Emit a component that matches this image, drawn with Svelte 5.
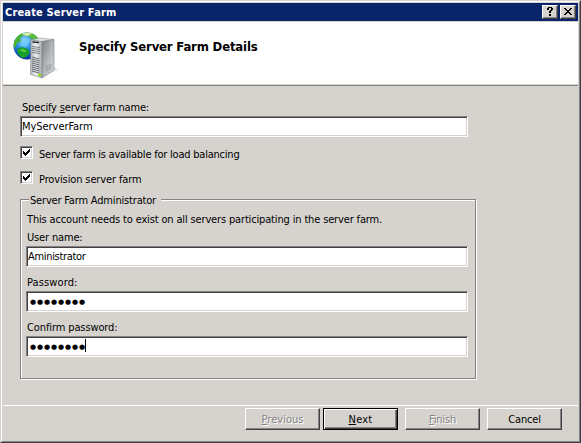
<script>
  let name = $state('MyServerFarm');
  const bullets = '●●●●●●●●';

  const accounts = [
    { label: 'User name:', labelWidth: 55.5, value: 'Aministrator', valueWidth: 57.5 },
    { label: 'Password:', labelWidth: 50.5, value: bullets, secret: true },
    { label: 'Confirm password:', labelWidth: 90.5, value: bullets, secret: true, focused: true }
  ];
  const checks = [
    { label: 'Server farm is available for load balancing', width: 200.5 },
    { label: 'Provision server farm', width: 102.5 }
  ];
  const buttons = [
    { key: 'P', rest: 'revious', width: 42, disabled: true },
    { key: 'N', rest: 'ext', width: 24, primary: true },
    { key: 'F', rest: 'inish', width: 27, disabled: true },
    { key: '', rest: 'Cancel', width: 32.5 }
  ];

  // Spreads the letters so that the text has the dialog font's advance width.
  function fit(node, width) {
    const natural = node.getBoundingClientRect().width;
    const count = node.textContent.length;
    node.style.letterSpacing = `${(width - natural) / count}px`;
  }
</script>

<div class="window">
  <div class="frame">
    <header class="titlebar">
      <span class="text" use:fit={111.5}>Create Server Farm</span>
      <div class="controls">
        <button class="control" aria-label="Help">
          <svg width="12" height="10" viewBox="0 0 12 10" shape-rendering="crispEdges">
            <path d="M4 0h4v1h-4zM3 1h2v2h-2zM7 1h2v2h-2zM6 3h2v1h-2zM5 4h2v2h-2zM5 7h2v2h-2z" />
          </svg>
        </button>
        <button class="control" aria-label="Close">
          <svg width="12" height="10" viewBox="0 0 12 10" shape-rendering="crispEdges">
            <path d="M2 1h2v1h-2zM8 1h2v1h-2zM3 2h2v1h-2zM7 2h2v1h-2zM4 3h4v1h-4zM5 4h2v1h-2zM4 5h4v1h-4zM3 6h2v1h-2zM7 6h2v1h-2zM2 7h2v1h-2zM8 7h2v1h-2z" />
          </svg>
        </button>
      </div>
    </header>

    <div class="banner">
      <svg class="logo" width="48" height="50" viewBox="0 0 48 50">
        <defs>
          <radialGradient id="globe" cx="40%" cy="30%" r="70%">
            <stop offset="0" stop-color="#9bdcff" />
            <stop offset=".45" stop-color="#278be0" />
            <stop offset="1" stop-color="#0b2e9c" />
          </radialGradient>
          <linearGradient id="side" x1="0" x2="1" y1="0" y2="1">
            <stop offset="0" stop-color="#777c80" />
            <stop offset=".5" stop-color="#b4b7b9" />
            <stop offset="1" stop-color="#dcdddf" />
          </linearGradient>
          <linearGradient id="front" x1="0" x2="1">
            <stop offset="0" stop-color="#b5b8bc" />
            <stop offset=".5" stop-color="#edeff1" />
            <stop offset="1" stop-color="#a4a8ac" />
          </linearGradient>
          <clipPath id="disc"><circle cx="16" cy="17" r="13.5" /></clipPath>
        </defs>
        <circle cx="16" cy="17" r="13.5" fill="url(#globe)" />
        <g clip-path="url(#disc)">
          <path d="M2 17L3 10L8 5L13 3L12 7L9 9L10 12L6 14L4 19Z" fill="#45b52e" />
          <path d="M13 3L20 3L27 7L29 12L24 10L20 10L18 7L14 7Z" fill="#5dbb38" />
          <path d="M10 5L17 3L21 5L16 7Z" fill="#d9edaa" />
          <path d="M6 20L11 18L17 20L19 24L15 28L11 29L7 25Z" fill="#16a02b" />
          <path d="M8 21L12 20L16 22L13 23Z" fill="#61cf40" />
          <path d="M10 13L16 9L20 11L15 18L9 17Z" fill="#70cdf6" opacity=".7" />
        </g>
        <path d="M31 48L47 41L44 38L34 43Z" fill="#cfcfcf" opacity=".5" />
        <path d="M20 11L29 9L43 10.500L31 13Z" fill="#dfe2e4" stroke="#8c9093" stroke-width=".5" />
        <path d="M31 12.500L43 10.500V41L31 49Z" fill="url(#side)" stroke="#797d80" stroke-width=".6" />
        <path d="M20 11L31 12.500V49L19.500 45.500Z" fill="url(#front)" stroke="#85898d" stroke-width=".6" />
        <path d="M21.500 13L28 13.500" stroke="#26292c" stroke-width="1.300" />
        <path d="M21 17.500L29 18.500M21 19.500L29 20.500M21 21.500L29 22.500M21 23.500L29 24.500" stroke="#777c81" stroke-width=".9" />
        <path d="M21 28L28.500 30M21 30L28.500 32M21 32L28.500 34M21 34L28.500 36M21 36L28.500 38M21 38L28.500 40M21 40L28.500 42M21 42L28.500 44" stroke="#666b72" stroke-width="1" />
        <path d="M35 38L41 35M35 40L41 37M35 42L41 39" stroke="#757a7e" stroke-width=".9" stroke-dasharray="1 .6" />
        <rect x="27" y="45" width="3" height="2" fill="#82e600" />
      </svg>
      <h1><span class="text" use:fit={178.5}>Specify Server Farm Details</span></h1>
    </div>

    <main class="content">
      <label class="caption" for="farm"><span class="text" use:fit={127}>Specify <u>s</u>erver farm name:</span></label>
      <div class="field" id="farm"><span class="text" use:fit={70.5}>{name}</span></div>

      <div class="checks">
        {#each checks as check}
          <div class="check">
            <span class="box">
              <svg width="9" height="9" viewBox="0 0 9 9" shape-rendering="crispEdges">
                <path d="M1 3h1v3h-1zM2 4h1v3h-1zM3 5h1v3h-1zM4 4h1v3h-1zM5 3h1v3h-1zM6 2h1v3h-1zM7 1h1v3h-1z" />
              </svg>
            </span>
            <span class="text" use:fit={check.width}>{check.label}</span>
          </div>
        {/each}
      </div>

      <section class="group">
        <div class="legend"><span class="text" use:fit={126}>Server Farm Administrator</span></div>
        <p><span class="text" use:fit={355}>This account needs to exist on all servers participating in the server farm.</span></p>
        {#each accounts as account}
          <div class="account">
            <div class="caption"><span class="text" use:fit={account.labelWidth}>{account.label}</span></div>
            <div class="field">
              {#if account.secret}
                <span class="text dots" use:fit={56}>{account.value}</span>
                {#if account.focused}<span class="caret"></span>{/if}
              {:else}
                <span class="text" use:fit={account.valueWidth}>{account.value}</span>
              {/if}
            </div>
          </div>
        {/each}
      </section>
    </main>

    <footer>
      {#each buttons as button}
        <button class="push" class:primary={button.primary} class:disabled={button.disabled}>
          <span class="text" use:fit={button.width}>{#if button.key}<u>{button.key}</u>{/if}{button.rest}</span>
        </button>
      {/each}
    </footer>
  </div>
</div>

<style>
  :global(body) {
    margin: 0;
    background: #d6d3ce;
  }
  .window,
  .window * {
    box-sizing: border-box;
  }
  .window {
    width: 581px;
    height: 443px;
    border: 1px solid;
    border-color: #d6d3ce #424142 #424142 #d6d3ce;
    background: #d6d3ce;
    color: #000;
    font: 11px/14px 'DejaVu Sans Condensed', 'DejaVu Sans', sans-serif;
    font-stretch: condensed;
  }
  .frame {
    height: 441px;
    border: 1px solid;
    border-color: #fff #848284 #848284 #fff;
    padding: 1px 0 0 1px;
    display: flex;
    flex-direction: column;
  }
  .text {
    display: inline-block;
    white-space: pre;
  }
  u {
    text-decoration: underline 1px;
    text-underline-offset: 1px;
  }
  button {
    margin: 0;
    padding: 0;
    border-radius: 0;
    font: inherit;
    color: inherit;
    background: #d6d3ce;
  }
  .titlebar {
    flex: none;
    height: 18px;
    margin-right: 1px;
    padding: 2px 2px 0 2px;
    display: flex;
    justify-content: space-between;
    background: #08246b;
    color: #fff;
    font-weight: bold;
  }
  .titlebar > .text {
    margin-top: 1px;
  }
  .controls {
    display: flex;
    gap: 2px;
  }
  .control {
    width: 16px;
    height: 14px;
    border: 1px solid;
    border-color: #fff #424142 #424142 #fff;
    box-shadow: inset -1px -1px #848284;
    display: flex;
    padding: 1px;
  }
  .control svg,
  .box svg {
    display: block;
  }
  .banner {
    flex: none;
    height: 64px;
    margin: 1px 1px 0 0;
    border-bottom: 1px solid #848284;
    box-shadow: inset 0 -1px #d6d3ce;
    background: #fff;
    display: flex;
  }
  .logo {
    margin: 7px 0 0 8px;
  }
  h1 {
    margin: 17px 0 0 20px;
    font-size: 13px;
    line-height: 16px;
    font-weight: bold;
  }
  .content {
    padding: 14px 0 0 17px;
    display: flex;
    flex-direction: column;
  }
  .caption {
    display: block;
    height: 16px;
    padding: 1px 0 0 2px;
  }
  .field {
    width: 448px;
    height: 21px;
    border: 1px solid;
    border-color: #848284 #fff #fff #848284;
    box-shadow: inset 1px 1px #424142, inset -1px -1px #d6d3ce;
    background: #fff;
    padding: 3px 0 0 1px;
    display: flex;
  }
  .checks {
    margin-top: 9px;
    display: flex;
    flex-direction: column;
    gap: 10px;
  }
  .check {
    height: 15px;
    display: flex;
    gap: 6px;
  }
  .check .text {
    margin-top: 2px;
  }
  .box {
    width: 13px;
    height: 13px;
    padding: 1px;
    border: 1px solid;
    border-color: #848284 #fff #fff #848284;
    box-shadow: inset 1px 1px #424142, inset -1px -1px #d6d3ce;
    background: #fff;
  }
  .group {
    width: 456px;
    height: 180px;
    margin-top: 13px;
    padding: 0 0 0 5px;
    border: 1px solid #848284;
    box-shadow: 1px 1px #fff, inset 1px 1px #fff;
  }
  .legend {
    width: 132px;
    height: 14px;
    margin: -6px 0 0 3px;
    padding-left: 1px;
    background: #d6d3ce;
  }
  .group p {
    height: 18px;
    margin: 5px 0 0 1px;
  }
  .account {
    height: 45px;
  }
  .account .caption {
    height: 15px;
    padding: 0 0 0 1px;
  }
  .account .field {
    width: 442px;
  }
  .dots {
    font: 7px/14px 'DejaVu Sans', sans-serif;
    margin-left: 2px;
    margin-right: -1px;
  }
  .caret {
    width: 1px;
    height: 13px;
    margin-top: -1px;
    background: #000;
  }
  footer {
    margin: auto 1px 0 0;
    height: 36px;
    border-top: 1px solid #fff;
    padding: 2px 16px 0 0;
    display: flex;
    justify-content: flex-end;
    gap: 7px;
  }
  .push {
    width: 75px;
    height: 22px;
    padding: 2px 0 0;
    border: 1px solid;
    border-color: #fff #424142 #424142 #fff;
    box-shadow: inset -1px -1px #848284;
  }
  .push:first-child {
    margin-right: -4px;
  }
  .primary {
    border-color: #000;
    box-shadow: inset 1px 1px #fff, inset -1px -1px #424142, inset -2px -2px #848284;
  }
  .disabled {
    color: #848284;
    text-shadow: 1px 1px #fff;
  }
</style>
